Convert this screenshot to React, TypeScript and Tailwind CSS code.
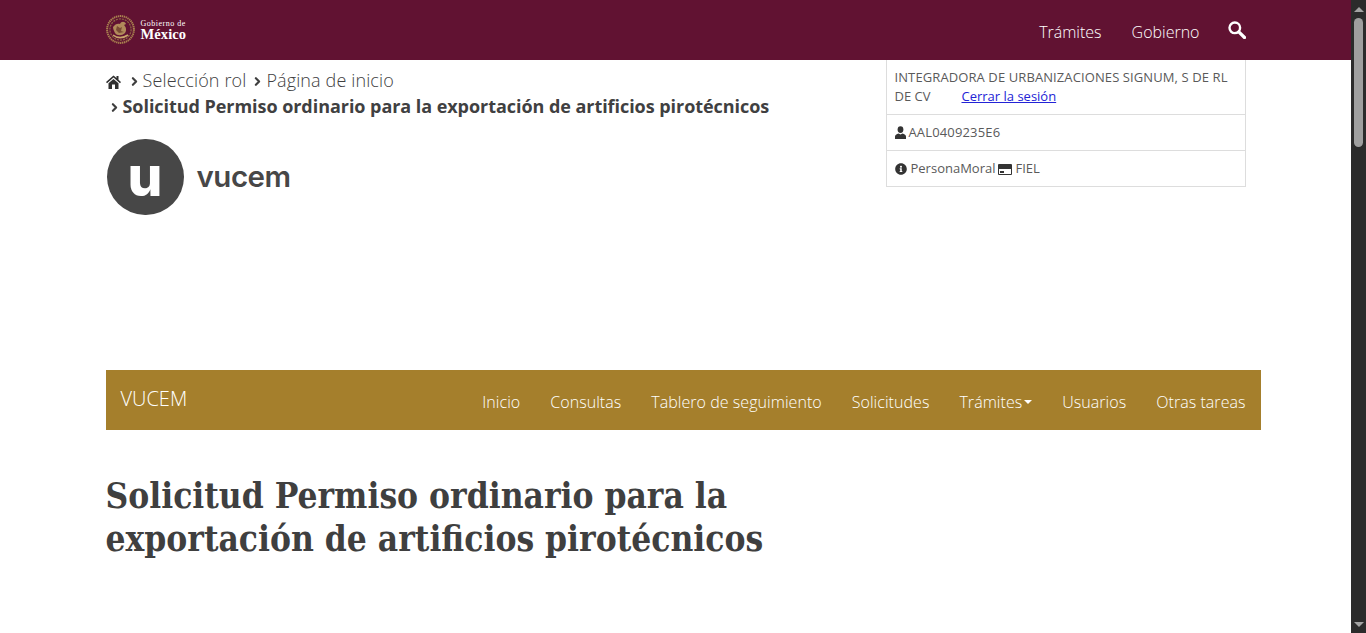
import { ChevronRight } from "lucide-react";
import { FaInfoCircle } from "react-icons/fa";

const navItems = ["Inicio", "Consultas", "Tablero de seguimiento", "Solicitudes"];

function Emblem() {
  return (
    <svg width="29" height="29" viewBox="0 0 29 29" fill="none">
      <circle cx="14.5" cy="14.5" r="13.4" stroke="#a9814f" strokeWidth="2" strokeDasharray="1.4 0.6" />
      <circle cx="14.5" cy="14.5" r="10.6" stroke="#8f6a45" strokeWidth="1.2" strokeDasharray="2 1" />
      <path d="M7 12c2-3 5-4 7-3 1-3 5-3 6 0l-2 1c2 2 3 5 1 8-3 3-8 3-10 0-1-2-2-4-2-6z" fill="#b08a5a" />
      <path d="M11 11l3 2 2-1-1 4 3 1-5 1-3-3z" fill="#7a4a35" />
      <path d="M7 20c4 3.500 10 3.500 15 0" stroke="#c9a66b" strokeWidth="1.600" />
    </svg>
  );
}

function HomeIcon() {
  return (
    <svg width="15" height="14" viewBox="0 0 15 14" className="inline-block align-[-2px]">
      <path d="M7.500 0.500L0 7l1 1.200 6.500-5.600L14 8.200 15 7l-2.500-2.200V1h-2v2.100z" fill="#2f2f2f" />
      <path d="M7.500 4L2.500 8.300V14h3.500V9.500h3V14h3.500V8.300z" fill="#2f2f2f" />
    </svg>
  );
}

function UserIcon() {
  return (
    <svg width="11" height="13" viewBox="0 0 11 13" fill="#333333">
      <ellipse cx="5.500" cy="3.600" rx="2.900" ry="3.400" />
      <path d="M0 13v-2.500c0-1.600 1.500-2.300 3.500-3l2 1 2-1c2 .7 3.500 1.400 3.500 3V13z" />
    </svg>
  );
}

function CardIcon() {
  return (
    <svg width="14" height="11" viewBox="0 0 14 11">
      <rect width="14" height="11" rx="1" fill="#333333" />
      <rect x="1" y="5" width="12" height="5" fill="#ffffff" />
      <rect x="2" y="7" width="4" height="2" fill="#333333" />
    </svg>
  );
}

function SearchIcon() {
  return (
    <svg width="18" height="18" viewBox="0 0 18 18" fill="none" stroke="#ffffff" className="-mt-[3px]">
      <circle cx="6.800" cy="6.800" r="5.300" strokeWidth="2.400" />
      <path d="M10.800 10.800l5.700 5.700" strokeWidth="3.200" strokeLinecap="round" />
    </svg>
  );
}

function Crumb({ className }: { className?: string }) {
  return <ChevronRight size={13} strokeWidth={4} className={"inline-block text-[#3f3f3f] " + (className ?? "")} />;
}

function Scrollbar() {
  return (
    <aside className="w-[15px] h-full bg-[#2b2b2b] flex flex-col items-center shrink-0">
      <div className="h-[18px] flex items-center justify-center">
        <div className="w-0 h-0 border-x-[5px] border-x-transparent border-b-[5px] border-b-[#a3a3a3]" />
      </div>
      <div className="w-[9px] h-[129px] rounded-[5px] bg-[#9f9f9f]" />
      <div className="flex-1" />
      <div className="h-[17px] flex items-center justify-center">
        <div className="w-0 h-0 border-x-[5px] border-x-transparent border-t-[5px] border-t-[#a3a3a3]" />
      </div>
    </aside>
  );
}

export default function App() {
  return (
    <div className="h-[633px] w-[1366px] overflow-hidden flex bg-white font-['Open_Sans',sans-serif] text-[#404041]">
      <main className="flex-1 min-w-0">
        <header className="h-[60px] bg-[#611232]">
          <div className="w-[1170px] mx-auto px-[15px] h-full flex items-center justify-between">
            <div className="flex items-center gap-[6px] -mt-[1px]">
              <Emblem />
              <div className="text-white font-['Liberation_Serif',serif] leading-none">
                <div className="text-[8px] tracking-[0.5px] leading-[8px]">Gobierno de</div>
                <div className="text-[14.5px] font-bold leading-[12px] tracking-[0.1px]">México</div>
              </div>
            </div>
            <nav className="flex items-center text-white text-[16px] font-light mt-[3px]">
              <a className="mr-[30px]">Trámites</a>
              <a className="mr-[28px]">Gobierno</a>
              <SearchIcon />
            </nav>
          </div>
        </header>

        <div className="w-[1170px] mx-auto px-[15px]">
          <div className="h-[310px] flex justify-between">
            <div className="w-[760px]">
              <div className="pt-[8px] text-[18px] leading-[24px] font-light tracking-[0.12px] text-[#404041]">
                <HomeIcon />
                <Crumb className="ml-[7px] mr-[2px] align-[-1px]" />
                <span>Selección rol</span>
                <Crumb className="ml-[5px] mr-[2px] align-[-1px]" />
                <span>Página de inicio</span>
              </div>
              <div className="mt-[1px] text-[18px] leading-[26px] font-bold tracking-[-0.05px]">
                <Crumb className="ml-[2px] mr-[2px] align-[-1px]" />
                Solicitud Permiso ordinario para la exportación de artificios pirotécnicos
              </div>
              <div className="mt-[20px] flex items-center">
                <div className="ml-[1px] w-[77px] h-[76px] rounded-full bg-[#474747] flex items-center justify-center">
                  <span className="text-white text-[55px] leading-none font-extrabold font-['Inter',sans-serif] -mt-[1px]">u</span>
                </div>
                <span className="ml-[13px] text-[29.5px] leading-none font-semibold tracking-[-0.5px] text-[#474747] font-['Inter',sans-serif]">vucem</span>
              </div>
            </div>

            <div className="w-[360px] h-[127px] border border-t-0 border-[#dddddd] text-[13px] text-[#5a5a5a]">
              <div className="h-[55px] px-[8px] pt-[8px] leading-[19px] border-b border-[#dddddd]">
                <div className="tracking-[0.1px]">INTEGRADORA DE URBANIZACIONES SIGNUM, S DE RL</div>
                <div className="flex gap-[31px]">
                  <span>DE CV</span>
                  <a className="text-[#2323d6] underline">Cerrar la sesión</a>
                </div>
              </div>
              <div className="h-[36px] px-[8px] flex items-center gap-[3px] border-b border-[#dddddd]">
                <UserIcon />
                <span className="tracking-[0.15px]">AAL0409235E6</span>
              </div>
              <div className="h-[36px] px-[8px] flex items-center">
                <FaInfoCircle size={12} className="text-[#333333] mr-[4px]" />
                <span>PersonaMoral</span>
                <span className="ml-[3px] mr-[3px]"><CardIcon /></span>
                <span>FIEL</span>
              </div>
            </div>
          </div>

          <nav className="h-[60px] -mr-[15px] bg-[#a57f2c] text-white flex justify-between px-[15px]">
            <div className="text-[20px] font-light leading-[57px]">VUCEM</div>
            <div className="flex items-center gap-[30px] text-[16px] font-light tracking-[0.05px] mt-[4px]">
              {navItems.map((item) => (
                <a key={item}>{item}</a>
              ))}
              <a className="flex items-center">
                Trámites
                <span className="ml-[2px] w-0 h-0 border-x-[4px] border-x-transparent border-t-[4px] border-t-white" />
              </a>
              <a>Usuarios</a>
              <a>Otras tareas</a>
            </div>
          </nav>

          <h1 className="mt-[44px] text-[35px] leading-[43px] font-bold font-['DejaVu_Serif_Condensed','DejaVu_Serif',serif] w-[780px] text-[#3f3f3f]">
            Solicitud Permiso ordinario para la exportación de artificios pirotécnicos
          </h1>
        </div>
      </main>
      <Scrollbar />
    </div>
  );
}
